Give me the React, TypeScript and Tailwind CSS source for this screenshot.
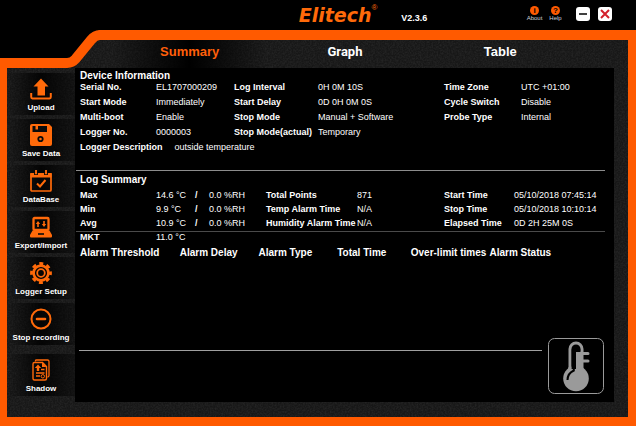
import { useState } from "react";
import type { ReactNode } from "react";

const tabs = [
  { id: "summary", label: "Summary", font: "" },
  { id: "graph", label: "Graph", font: "font-[Roboto,sans-serif]" },
  { id: "table", label: "Table", font: "" },
];

const deviceInfo = [
  ["Serial No.", "EL1707000209"],
  ["Log Interval", "0H 0M 10S"],
  ["Time Zone", "UTC +01:00"],
  ["Start Mode", "Immediately"],
  ["Start Delay", "0D 0H 0M 0S"],
  ["Cycle Switch", "Disable"],
  ["Multi-boot", "Enable"],
  ["Stop Mode", "Manual + Software"],
  ["Probe Type", "Internal"],
  ["Logger No.", "0000003"],
  ["Stop Mode(actual)", "Temporary"],
];

const logSummary = [
  { stat: "Max", temp: "14.6 °C", rh: "0.0 %RH", mid: "Total Points", midValue: "871", time: "Start Time", timeValue: "05/10/2018 07:45:14" },
  { stat: "Min", temp: "9.9 °C", rh: "0.0 %RH", mid: "Temp Alarm Time", midValue: "N/A", time: "Stop Time", timeValue: "05/10/2018 10:10:14" },
  { stat: "Avg", temp: "10.9 °C", rh: "0.0 %RH", mid: "Humidity Alarm Time", midValue: "N/A", time: "Elapsed Time", timeValue: "0D 2H 25M 0S" },
];

const alarmColumns = [
  { label: "Alarm Threshold", width: "w-[19%]" },
  { label: "Alarm Delay", width: "w-[15%]" },
  { label: "Alarm Type", width: "w-[15%]" },
  { label: "Total Time", width: "w-[14%]" },
  { label: "Over-limit times", width: "w-[15%]" },
  { label: "Alarm Status", width: "w-[22%]" },
];

function Icon({ children }: { children: ReactNode }) {
  return (
    <svg viewBox="0 0 22 22" className="w-[22px] h-[22px] text-[#ff6a0a]" fill="none" stroke="currentColor" aria-hidden="true">
      {children}
    </svg>
  );
}

const actions = [
  {
    label: "Upload",
    icon: (
      <Icon>
        <path d="M11 0.5 18.5 8.5H15V17.5H7.5V8.5H3.5Z" fill="currentColor" stroke="none" />
        <path d="M1.2 15V19Q1.2 20.4 2.4 20.4H19.6Q20.8 20.4 20.8 19V15" strokeWidth="2" />
      </Icon>
    ),
  },
  {
    label: "Save Data",
    icon: (
      <Icon>
        <path d="M2 0H19L22 3V20Q22 22 20 22H2Q0 22 0 20V2Q0 0 2 0Z" fill="currentColor" stroke="none" />
        <path d="M2.5 2H17V8H2.5Z" fill="#0a0a0a" stroke="none" />
        <path d="M5.5 2H8V5.500H5.500Z" fill="currentColor" stroke="none" />
        <circle cx="10.500" cy="15" r="2.200" stroke="#0a0a0a" strokeWidth="1.800" />
      </Icon>
    ),
  },
  {
    label: "DataBase",
    icon: (
      <Icon>
        <path d="M1 4H21V20Q21 21 20 21H2Q1 21 1 20Z" strokeWidth="1.7" />
        <path d="M0.5 3H21.5V7.5H0.5Z" fill="currentColor" stroke="none" />
        <path d="M6 0V5M16 0V5" stroke="#0a0a0a" strokeWidth="3.8" />
        <path d="M6 0V4.2M16 0V4.2" strokeWidth="1.9" />
        <path d="M7 13.5 10 16.5 15.5 10" strokeWidth="2" />
      </Icon>
    ),
  },
  {
    label: "Export/Import",
    icon: (
      <Icon>
        <rect x="3.500" y="2" width="15" height="12" rx="1" strokeWidth="2.300" />
        <path d="M2.5 14.500H19.5L22 19V20.5Q22 21.5 21 21.5H1Q0 21.5 0 20.5V19Z" fill="currentColor" stroke="none" />
        <path d="M8 18H14" stroke="#0a0a0a" strokeWidth="1.600" />
        <path d="M8 11V7M14 5V9" strokeWidth="1.6" />
        <path d="M5.8 8 8 5 10.2 8ZM11.8 8 14 11 16.2 8Z" fill="currentColor" stroke="none" />
      </Icon>
    ),
  },
  {
    label: "Logger Setup",
    icon: (
      <Icon>
        <circle cx="11" cy="11" r="9.5" strokeWidth="2.8" strokeDasharray="4 3.46" strokeDashoffset="2" />
        <circle cx="11" cy="11" r="7.4" strokeWidth="2.6" />
        <circle cx="11" cy="11" r="3.8" strokeWidth="1.8" />
      </Icon>
    ),
  },
  {
    label: "Stop recording",
    icon: (
      <Icon>
        <circle cx="11" cy="11" r="9.5" strokeWidth="2" />
        <path d="M7 11H15" strokeWidth="2.6" strokeLinecap="round" />
      </Icon>
    ),
  },
  {
    label: "Shadow",
    icon: (
      <Icon>
        <path d="M5.500 2.500V1.500Q5.500 1 6.500 1H17.500Q19 1 19 2.500V16.500Q19 18 17.500 18" strokeWidth="1.3" />
        <path d="M4.500 3.500H12.500L16.500 7.500V19.500Q16.500 21 15 21H4.500Q3 21 3 19.500V5Q3 3.500 4.500 3.500Z" strokeWidth="1.4" />
        <path d="M12 3.500V8H16.500Z" fill="currentColor" stroke="none" />
        <path d="M4.800 9 8 5.500 11.200 9H9.200V12H6.800V9Z" fill="currentColor" stroke="none" />
        <path d="M11 10.500H14.500M6 14H14.500M6 17H10" strokeWidth="1.4" />
        <circle cx="12.800" cy="17.300" r="1.700" strokeWidth="1" />
      </Icon>
    ),
  },
];

function Header() {
  return (
    <header className="grid grid-cols-[1fr_auto_1fr] h-[30px]">
      <div />
      <div className="flex items-center pl-10">
        <span className="font-[DejaVu_Sans,sans-serif] text-[19px] leading-[30px] font-bold italic text-[#ff6a0a]">Elitech</span>
        <sup className="self-start pt-2 text-[8px] leading-2 text-[#ff6a0a]">®</sup>
      </div>
      <div className="flex items-start justify-between pl-6 pr-6">
        <span className="pt-3 text-[9px] leading-3 font-bold">V2.3.6</span>
        <div className="flex items-start">
          {[
            { label: "About", mark: "i" },
            { label: "Help", mark: "?" },
          ].map((item) => (
            <button key={item.label} type="button" className="flex w-[21px] flex-col items-center pt-1.5">
              <span className="flex size-[9px] items-center justify-center rounded-full bg-[#ff5a00] text-[8px] leading-[9px] font-bold text-black">{item.mark}</span>
              <span className="text-[6px] leading-[7px] text-gray-300">{item.label}</span>
            </button>
          ))}
          <button type="button" aria-label="Minimize" className="mt-[7px] ml-[10px] flex size-[14px] items-center justify-center rounded-[3px] bg-white">
            <svg viewBox="0 0 14 14" className="size-[14px]" stroke="#111" strokeWidth="1.600">
              <path d="M3 7H11" />
            </svg>
          </button>
          <button type="button" aria-label="Close" className="mt-[7px] ml-2 flex size-[14px] items-center justify-center rounded-[3px] bg-white">
            <svg viewBox="0 0 14 14" className="size-[14px]" stroke="#d3202c" strokeWidth="2">
              <path d="M3 3 11 11M11 3 3 11" />
            </svg>
          </button>
        </div>
      </div>
    </header>
  );
}

function Grain() {
  return (
    <svg className="absolute inset-0 h-full w-full" aria-hidden="true">
      <filter id="grain">
        <feTurbulence type="fractalNoise" baseFrequency="0.6" numOctaves="2" seed="4" />
        <feColorMatrix values="0 0 0 0 1  0 0 0 0 1  0 0 0 0 1  0.12 0 0 0 -0.04" />
      </filter>
      <rect width="100%" height="100%" filter="url(#grain)" />
    </svg>
  );
}

function Notch() {
  return (
    <svg viewBox="0 0 110 39" className="absolute -top-[10px] -left-[7px] h-[39px] w-[110px]" fill="none" aria-hidden="true">
      <path d="M0 0H99L70 33H0Z" fill="#000" />
      <path d="M0 33H67Q72 33 75.500 29L91 10Q95 5 100 5H110" stroke="#ff5a00" strokeWidth="10" />
    </svg>
  );
}

function Sidebar() {
  return (
    <nav className="flex w-[68px] shrink-0 flex-col gap-1 pt-[5px]">
      {actions.map((action) => (
        <button
          key={action.label}
          type="button"
          className="flex h-[42px] flex-col items-center gap-0.5 bg-linear-to-r from-transparent via-black/85 to-black/30 pt-[5px] last:mt-[5px]"
        >
          {action.icon}
          <span className="text-[8px] leading-3 font-bold whitespace-nowrap">{action.label}</span>
        </button>
      ))}
    </nav>
  );
}

function DeviceInformation() {
  return (
    <section className="border-b border-[#8c8c8c] pt-[3px] pb-[15px] pl-1">
      <h2 className="text-[10px] leading-[9px] font-bold">Device Information</h2>
      <dl className="grid grid-cols-[76fr_78fr_84fr_126fr_77fr_84fr]">
        {deviceInfo.map(([label, value]) => (
          <div key={label} className="contents">
            <dt className="font-bold">{label}</dt>
            <dd>{value}</dd>
          </div>
        ))}
      </dl>
      <dl className="flex gap-3">
        <dt className="font-bold">Logger Description</dt>
        <dd>outside temperature</dd>
      </dl>
    </section>
  );
}

function LogSummary() {
  return (
    <section>
      <h2 className="pl-1 text-[10px] leading-[17px] font-bold">Log Summary</h2>
      {logSummary.map((row) => (
        <dl key={row.stat} className="grid grid-cols-[76fr_110fr_91fr_87fr_70fr_91fr] pl-1 leading-[14px]">
          <dt className="font-bold">{row.stat}</dt>
          <dd className="flex">
            <span className="w-[39px]">{row.temp}</span>
            <span className="w-[14px] font-bold">/</span>
            <span>{row.rh}</span>
          </dd>
          <dt className="font-bold">{row.mid}</dt>
          <dd>{row.midValue}</dd>
          <dt className="font-bold">{row.time}</dt>
          <dd>{row.timeValue}</dd>
        </dl>
      ))}
      <dl className="mt-px grid grid-cols-[76fr_449fr] border-t border-[#4a4a4a] pl-1 leading-[11px]">
        <dt className="font-bold">MKT</dt>
        <dd>11.0 °C</dd>
      </dl>
    </section>
  );
}

function AlarmTable() {
  return (
    <table className="ml-1 table-fixed text-left text-[10px] leading-4">
      <thead>
        <tr>
          {alarmColumns.map((col) => (
            <th key={col.label} scope="col" className={`pt-0.5 ${col.width}`}>
              {col.label}
            </th>
          ))}
        </tr>
      </thead>
    </table>
  );
}

function Thermometer() {
  return (
    <svg viewBox="0 0 56 56" className="size-14 shrink-0" fill="none" aria-hidden="true">
      <rect x="0.500" y="0.500" width="55" height="55" rx="6" stroke="#9a9a9a" />
      <path d="M22 31V11A6 6 0 0 1 34 11V31" stroke="#9a9a9a" strokeWidth="3" />
      <circle cx="28" cy="40.500" r="12.800" fill="#9a9a9a" />
      <path d="M28 14H35V34H28ZM20.500 29H28V33H20.500Z" fill="#9a9a9a" />
      <path d="M35 15.500H40M35 23H40" stroke="#9a9a9a" strokeWidth="3" strokeLinecap="round" />
      <path d="M25.800 30V32.500Q19.500 35.500 19.500 42" stroke="#000" strokeWidth="2" />
      <path d="M23.600 12V31H28V14Q31 14 32.400 12.500A4.400 4.400 0 0 0 23.600 12Z" fill="#000" />
    </svg>
  );
}

export default function App() {
  const [activeTab, setActiveTab] = useState("summary");

  return (
    <div className="flex min-h-screen flex-col bg-black font-[Liberation_Sans,Arial,sans-serif] text-white">
      <Header />
      <main className="relative flex flex-1 flex-col border-t-[10px] border-r-8 border-b-[9px] border-l-[7px] border-[#ff5a00] bg-[#171717]">
        <Grain />
        <div role="tablist" className="relative grid h-[28px] grid-cols-3 pr-[50px] pl-[105px]">
          {tabs.map((tab) => (
            <button
              key={tab.id}
              type="button"
              role="tab"
              aria-selected={activeTab === tab.id}
              onClick={() => setActiveTab(tab.id)}
              className={`pb-1 text-[13px] font-bold ${tab.font} ${
                activeTab === tab.id ? "bg-linear-to-r from-transparent via-black to-transparent text-[#ff5f0a]" : ""
              }`}
            >
              {tab.label}
            </button>
          ))}
        </div>
        <div className="relative flex flex-1 pr-[14px] pb-[15px]">
          <Sidebar />
          <div className="flex min-w-0 flex-1 flex-col bg-black pr-[9px] pb-2 pl-px text-[9px] leading-[15px] whitespace-nowrap">
            <DeviceInformation />
            <LogSummary />
            <AlarmTable />
            <div className="mt-auto flex gap-1.5 pr-px pl-[3px]">
              <hr className="mt-3 flex-1 border-[#a0a0a0]" />
              <Thermometer />
            </div>
          </div>
        </div>
        <Notch />
      </main>
    </div>
  );
}
